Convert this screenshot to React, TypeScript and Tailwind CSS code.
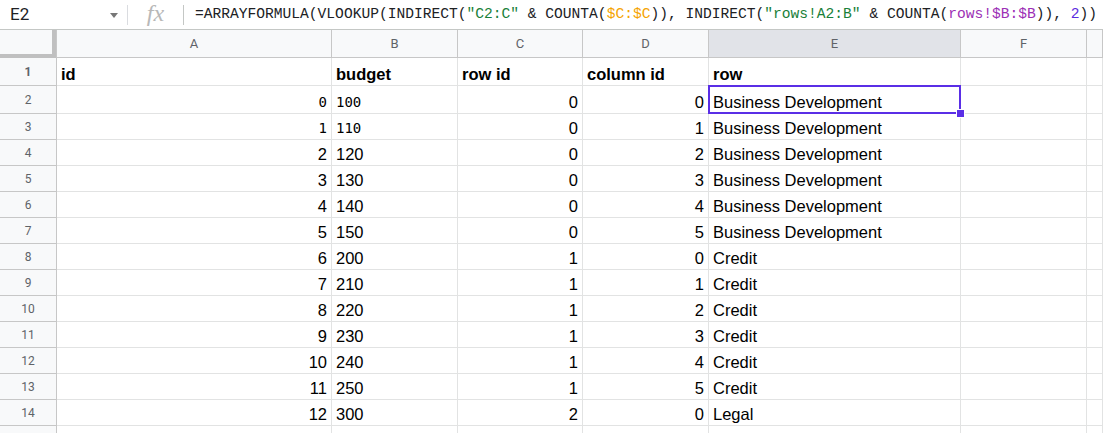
import React from "react";

const cols = ["A", "B", "C", "D", "E", "F", ""];
const gridCols = "grid grid-cols-[57px_275px_126px_125px_126px_252px_126px_1fr]";

type Row = { n: number; a: number; b: number; c: number; d: number; e: string; mono?: boolean };

const rows: Row[] = [
  { n: 2, a: 0, b: 100, c: 0, d: 0, e: "Business Development", mono: true },
  { n: 3, a: 1, b: 110, c: 0, d: 1, e: "Business Development", mono: true },
  { n: 4, a: 2, b: 120, c: 0, d: 2, e: "Business Development" },
  { n: 5, a: 3, b: 130, c: 0, d: 3, e: "Business Development" },
  { n: 6, a: 4, b: 140, c: 0, d: 4, e: "Business Development" },
  { n: 7, a: 5, b: 150, c: 0, d: 5, e: "Business Development" },
  { n: 8, a: 6, b: 200, c: 1, d: 0, e: "Credit" },
  { n: 9, a: 7, b: 210, c: 1, d: 1, e: "Credit" },
  { n: 10, a: 8, b: 220, c: 1, d: 2, e: "Credit" },
  { n: 11, a: 9, b: 230, c: 1, d: 3, e: "Credit" },
  { n: 12, a: 10, b: 240, c: 1, d: 4, e: "Credit" },
  { n: 13, a: 11, b: 250, c: 1, d: 5, e: "Credit" },
  { n: 14, a: 12, b: 300, c: 2, d: 0, e: "Legal" },
];

const cell = "border-r border-b border-[#e2e3e3] px-[4px] flex items-end leading-[22px] whitespace-nowrap overflow-hidden";
const rowHead = "bg-[#f8f9fa] border-r border-b border-[#c7c7c7] flex items-center justify-center text-[12px] text-[#5f6368]";

export default function App() {
  return (
    <div className="w-[1103px] h-[433px] overflow-hidden bg-white font-['Liberation_Sans',Arial,sans-serif] text-black">
      {/* formula bar */}
      <div className="h-[30px] flex items-center border-b border-[#c4c7c5]">
        <div className="w-[127px] h-full flex items-center justify-between pl-[10px] pr-[9px]">
          <span className="text-[17px] text-[#202124] font-['Roboto',sans-serif]">E2</span>
          <svg width="8" height="5" viewBox="0 0 8 5" className="mt-[2px]">
            <path d="M0 0 L8 0 L4 5 Z" fill="#777" />
          </svg>
        </div>
        <div className="w-px h-[20px] bg-[#dadce0]" />
        <div className="w-[55px] flex items-center justify-center">
          <span className="font-['Liberation_Serif',serif] italic text-[24px] text-[#b8b8b8] leading-none -mt-[3px]">fx</span>
        </div>
        <div className="w-px h-[20px] bg-[#c4c7c5]" />
        <div className="pl-[11px] font-['Liberation_Mono',monospace] text-[14.6px] text-[#202124] whitespace-nowrap">
          =ARRAYFORMULA(VLOOKUP(INDIRECT(<span className="text-[#188038]">"C2:C"</span> &amp; COUNTA(
          <span className="text-[#f5a300]">$C:$C</span>)), INDIRECT(<span className="text-[#188038]">"rows!A2:B"</span> &amp; COUNTA(
          <span className="text-[#9c2fb5]">rows!$B:$B</span>)), <span className="text-[#5b2be0]">2</span>))
        </div>
      </div>

      {/* column headers */}
      <div className={`${gridCols} h-[28px]`}>
        <div className="bg-[#f8f9fa] border-r border-[#c7c7c7] flex flex-col">
          <div className="flex-1 flex">
            <div className="flex-1" />
            <div className="w-[4px] bg-[#c0c0c0]" />
          </div>
          <div className="h-[4px] bg-[#c0c0c0]" />
        </div>
        {cols.map((c, i) => (
          <div
            key={i}
            className={`border-r border-b border-[#c7c7c7] flex items-center justify-center text-[13px] text-[#5f6368] font-['Roboto',sans-serif] ${c === "E" ? "bg-[#e1e3e8]" : "bg-[#f8f9fa]"}`}
          >
            {c}
          </div>
        ))}
      </div>

      {/* row 1 */}
      <div className={`${gridCols} h-[28px] text-[16.5px] font-bold`}>
        <div className={`${rowHead} font-['Roboto',sans-serif]`}>1</div>
        <div className={cell}>id</div>
        <div className={cell}>budget</div>
        <div className={cell}>row id</div>
        <div className={cell}>column id</div>
        <div className={cell}>row</div>
        <div className={cell} />
        <div className={cell} />
      </div>

      {rows.map((r) => {
        const mono = r.mono ? "font-['DejaVu_Sans_Mono',monospace] text-[14px]" : "";
        const sel = r.n === 2;
        return (
          <div key={r.n} className={`${gridCols} ${sel ? "h-[28px]" : "h-[26px]"} text-[16.5px]`}>
            <div className={`${rowHead} font-['Roboto',sans-serif] ${sel ? "bg-[#e1e3e8]" : ""}`}>{r.n}</div>
            <div className={`${cell} justify-end ${mono}`}>{r.a}</div>
            <div className={`${cell} ${mono}`}>{r.b}</div>
            <div className={`${cell} justify-end`}>{r.c}</div>
            <div className={`${cell} justify-end`}>{r.d}</div>
            <div className={`${cell} relative overflow-visible`}>
              {r.e}
              {sel && (
                <>
                  <div className="absolute -left-px -top-px -right-px -bottom-px border-2 border-[#5a2ee6]" />
                  <div className="absolute -right-[5px] -bottom-[5px] w-[9px] h-[9px] bg-[#5a2ee6] border border-white z-10" />
                </>
              )}
            </div>
            <div className={cell} />
            <div className={cell} />
          </div>
        );
      })}

      <div className={`${gridCols} h-[26px]`}>
        <div className={rowHead} />
        <div className={cell} />
        <div className={cell} />
        <div className={cell} />
        <div className={cell} />
        <div className={cell} />
        <div className={cell} />
        <div className={cell} />
      </div>
    </div>
  );
}
